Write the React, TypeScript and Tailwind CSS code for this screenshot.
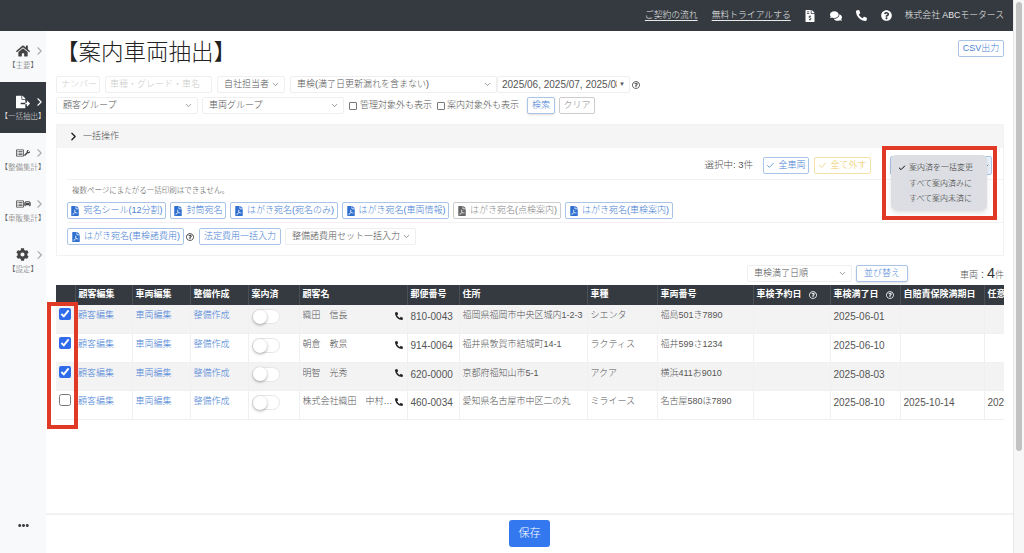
import { ChevronDown, ChevronRight, Check } from 'lucide-react'
import {
  FaCar,
  FaCog,
  FaComments,
  FaEllipsisH,
  FaFileExport,
  FaFileInvoiceDollar,
  FaFilePdf,
  FaHome,
  FaPhone,
  FaQuestionCircle,
  FaRegListAlt,
  FaRegQuestionCircle,
  FaWrench,
} from 'react-icons/fa'
import type { ReactNode } from 'react'

const COLS = [19, 57, 58, 58, 51, 108, 52, 128, 70, 96, 77, 70, 84, 80]

const ROWS = [
  { checked: true, name: '織田　信長', zip: '810-0043', addr: '福岡県福岡市中央区城内1-2-3', car: 'シエンタ', plate: '福島501き7890', exp: '2025-06-01', ins: '', any: '' },
  { checked: true, name: '朝倉　教景', zip: '914-0064', addr: '福井県敦賀市結城町14-1', car: 'ラクティス', plate: '福井599さ1234', exp: '2025-06-10', ins: '', any: '' },
  { checked: true, name: '明智　光秀', zip: '620-0000', addr: '京都府福知山市5-1', car: 'アクア', plate: '横浜411お9010', exp: '2025-08-03', ins: '', any: '' },
  { checked: false, name: '株式会社織田　中村信長', zip: '460-0034', addr: '愛知県名古屋市中区二の丸', car: 'ミライース', plate: '名古屋580ほ7890', exp: '2025-08-10', ins: '2025-10-14', any: '2025-11-20' },
]

function NavItem({ icon, label, active }: { icon: ReactNode; label: string; active?: boolean }) {
  return (
    <div className={`h-[51px] flex flex-col justify-center ${active ? 'bg-[#343a40] text-white' : 'text-[#444]'}`}>
      <div className="flex items-center h-[16px] pl-[16px] gap-[3px] mt-[1px]">
        <span className="w-[14px] flex justify-center">{icon}</span>
        <ChevronRight size={14} strokeWidth={2} className={active ? 'text-white' : 'text-[#aaa]'} />
      </div>
      <span className={`text-[7.5px] leading-[12px] text-center whitespace-nowrap mt-[1px] ${active ? 'text-[#ddd]' : 'text-[#666]'}`}>{label}</span>
    </div>
  )
}

function Select({ label, className }: { label: string; className: string }) {
  return (
    <div className={`h-[17px] flex items-center justify-between pl-[6px] pr-[4px] bg-white border border-[#efefef] rounded-[2px] text-[9px] text-[#555] whitespace-nowrap ${className}`}>
      <span>{label}</span>
      <ChevronDown size={9} className="text-[#777] shrink-0" />
    </div>
  )
}

function Btn({ children, className, gray }: { children: ReactNode; className: string; gray?: boolean }) {
  return (
    <div className={`h-[17px] flex items-center justify-center gap-[3px] bg-white border rounded-[2px] text-[9px] whitespace-nowrap ${gray ? 'border-[#ccc] text-[#888]' : 'border-[#a9c4e6] text-[#4a7fd4]'} ${className}`}>
      {children}
    </div>
  )
}

function PdfBtn({ label, className, gray }: { label: string; className: string; gray?: boolean }) {
  return (
    <Btn className={className} gray={gray}>
      <FaFilePdf size={10} className={gray ? 'text-[#666]' : 'text-[#2f6fd0]'} />
      {label}
    </Btn>
  )
}

function Help({ className }: { className?: string }) {
  return <FaRegQuestionCircle size={8} className={className} />
}

function Th({ children }: { children?: ReactNode }) {
  return <th className="px-[3px] text-left font-bold border-r border-[#4a5056] whitespace-nowrap overflow-hidden">{children}</th>
}

function Td({ children, num }: { children?: ReactNode; num?: boolean }) {
  return <td className={`px-[3px] pt-[4px] align-top border-r border-[#f0f0f0] whitespace-nowrap overflow-hidden ${num ? 'text-[10px]' : ''}`}>{children}</td>
}

export default function App() {
  return (
    <div className="w-[1024px] h-[553px] flex overflow-hidden bg-white font-['Liberation_Sans','Noto_Sans_CJK_JP',sans-serif] font-light">
      <div className="flex-1 flex flex-col min-w-0">
        <header className="h-[31px] bg-[#343a40] flex items-center justify-end gap-[11px] pr-[9px] text-[8.8px] text-[#e8e8e8]">
          <span className="underline underline-offset-2">ご契約の流れ</span>
          <span className="underline underline-offset-2 ml-[3px]">無料トライアルする</span>
          <FaFileInvoiceDollar size={12} className="text-white ml-[2px]" />
          <FaComments size={12} className="text-white ml-[3px]" />
          <FaPhone size={11} className="text-white ml-[3px] scale-x-[-1]" />
          <FaQuestionCircle size={11} className="text-white ml-[3px]" />
          <span className="ml-[2px]">株式会社 ABCモータース</span>
        </header>

        <div className="flex-1 flex min-h-0">
          <nav className="w-[46px] shrink-0 bg-[#f8f9fa] flex flex-col">
            <NavItem icon={<FaHome size={14} />} label="【主要】" />
            <NavItem active icon={<FaFileExport size={14} />} label="【一括抽出】" />
            <NavItem icon={<span className="flex items-center"><FaRegListAlt size={8} /><FaWrench size={6} /></span>} label="【整備集計】" />
            <NavItem icon={<span className="flex items-center"><FaRegListAlt size={8} /><FaCar size={7} /></span>} label="【車販集計】" />
            <NavItem icon={<FaCog size={13} />} label="【設定】" />
            <div className="mt-auto h-[40px] flex items-start justify-center pt-[7px] text-[#444]">
              <FaEllipsisH size={11} />
            </div>
          </nav>

          <main className="flex-1 flex flex-col min-w-0">
            <div className="flex-1 pl-[10px] pr-[9px] min-h-0">
              <div className="h-[45px] flex justify-between items-start">
                <h1 className="text-[22.5px] leading-[44px] text-[#222] font-light">【案内車両抽出】</h1>
                <Btn className="w-[46px] mt-[9px]">CSV出力</Btn>
              </div>

              <div className="flex items-center gap-[5px] h-[17px]">
                <div className="w-[44px] h-[17px] flex items-center px-[4px] border border-[#efefef] rounded-[2px] text-[9px] text-[#ccc] whitespace-nowrap">ナンバー</div>
                <div className="w-[107px] h-[17px] flex items-center px-[4px] border border-[#efefef] rounded-[2px] text-[9px] text-[#ccc] whitespace-nowrap">車種・グレード・車名</div>
                <Select label="自社担当者" className="w-[68px]" />
                <Select label="車検(満了日更新漏れを含まない)" className="w-[207px]" />
                <div className="-ml-[5px] w-[133px] h-[17px] flex items-center justify-between pl-[4px] pr-[4px] border border-[#efefef] rounded-[2px] text-[10px] text-[#555] whitespace-nowrap">
                  <span className="w-[115px] overflow-hidden">2025/06, 2025/07, 2025/08</span>
                  <span className="text-[6px]">▼</span>
                </div>
                <Help className="text-[#444] -ml-[3px]" />
              </div>

              <div className="flex items-center mt-[4px] h-[17px] text-[9px] text-[#555]">
                <Select label="顧客グループ" className="w-[142px]" />
                <Select label="車両グループ" className="w-[142px] ml-[4px]" />
                <span className="w-[8px] h-[8px] border border-[#777] rounded-[1px] ml-[5px]" />
                <span className="ml-[3px] whitespace-nowrap">管理対象外も表示</span>
                <span className="w-[8px] h-[8px] border border-[#777] rounded-[1px] ml-[5px]" />
                <span className="ml-[2px] whitespace-nowrap">案内対象外も表示</span>
                <Btn className="w-[28px] ml-[8px] shadow-sm">検索</Btn>
                <Btn gray className="w-[36px] ml-[4px]">クリア</Btn>
              </div>

              <section className="relative mt-[10px] h-[132px] border border-[#f2f2f2]">
                <div className="h-[23px] bg-[#f5f5f5] flex items-center pl-[10px] text-[9px] text-[#555]">
                  <ChevronRight size={13} strokeWidth={2.5} className="text-[#222]" />
                  <span className="ml-[3px]">一括操作</span>
                </div>
                <div className="ml-[10px]">
                  <div className="h-[32px] pt-[4px] flex items-center justify-end border-b border-[#f2f2f2] pr-[11px] text-[9px] text-[#555]">
                    <span className="text-[9.5px] mr-[10px]">選択中: 3件</span>
                    <Btn className="w-[46px]"><Check size={9} />全車両</Btn>
                    <Btn className="w-[57px] ml-[5px] !border-[#f3e2a8] !text-[#eccb68]"><Check size={9} />全て外す</Btn>
                    <Btn className="w-[102px] ml-[19px] !h-[19px] !bg-[#e8f0fb] !justify-end pr-[1px]">
                      <ChevronDown size={8} className="text-[#555]" />
                    </Btn>
                  </div>
                  <div className="h-[43px] border-b border-[#f2f2f2]">
                    <p className="pl-[5px] pt-[6px] text-[7.5px] leading-[10px] text-[#555]">複数ページにまたがる一括印刷はできません。</p>
                    <div className="flex gap-[4px] mt-[6px]">
                      <PdfBtn label="宛名シール(12分割)" className="w-[99px]" />
                      <PdfBtn label="封筒宛名" className="w-[56px]" />
                      <PdfBtn label="はがき宛名(宛名のみ)" className="w-[108px]" />
                      <PdfBtn label="はがき宛名(車両情報)" className="w-[107px]" />
                      <PdfBtn gray label="はがき宛名(点検案内)" className="w-[108px]" />
                      <PdfBtn label="はがき宛名(車検案内)" className="w-[108px]" />
                    </div>
                  </div>
                  <div className="flex items-center mt-[5px]">
                    <PdfBtn label="はがき宛名(車検諸費用)" className="w-[117px]" />
                    <Help className="text-[#333] ml-[2px]" />
                    <Btn className="w-[82px] ml-[5px]">法定費用一括入力</Btn>
                    <Select label="整備諸費用セット一括入力" className="w-[131px] ml-[4px]" />
                  </div>
                </div>

                <div className="absolute left-[834px] top-[30px] w-[96px] h-[55px] bg-[#dcdee3] rounded-[5px] shadow-md text-[8px] leading-[15.5px] text-[#333] pt-[5px] whitespace-nowrap">
                  <div className="flex items-center pl-[7px]"><Check size={8} strokeWidth={3} className="text-black mr-[3px]" />案内済を一括変更</div>
                  <div className="pl-[18px]">すべて案内済みに</div>
                  <div className="pl-[18px]">すべて案内未済に</div>
                </div>
                <div className="absolute left-[825px] top-[21px] w-[115px] h-[74px] border-[4px] border-[#e03a26]" />
              </section>

              <div className="mt-[9px] h-[17px] flex items-center justify-end text-[9px] text-[#555]">
                <Select label="車検満了日順" className="w-[105px]" />
                <Btn className="w-[52px] ml-[4px] shadow-sm">並び替え</Btn>
                <span className="ml-[44px] w-[52px] text-right whitespace-nowrap pt-[1px]">
                  車両：<span className="text-[14.5px] text-[#333]">4</span>件
                </span>
              </div>

              <div className="relative mt-[3px]">
                <div className="overflow-hidden">
                  <table className="table-fixed border-collapse text-[9px] text-[#555] w-[1008px]">
                    <colgroup>
                      {COLS.map((w, i) => (
                        <col key={i} style={{ width: w }} />
                      ))}
                    </colgroup>
                    <thead>
                      <tr className="h-[20px] bg-[#343a40] text-white">
                        <Th />
                        <Th>顧客編集</Th>
                        <Th>車両編集</Th>
                        <Th>整備作成</Th>
                        <Th>案内済</Th>
                        <Th>顧客名</Th>
                        <Th>郵便番号</Th>
                        <Th>住所</Th>
                        <Th>車種</Th>
                        <Th>車両番号</Th>
                        <Th><span className="inline-flex items-center gap-[7px]">車検予約日<Help /></span></Th>
                        <Th><span className="inline-flex items-center gap-[7px]">車検満了日<Help /></span></Th>
                        <Th>自賠責保険満期日</Th>
                        <Th>任意保険満期日</Th>
                      </tr>
                    </thead>
                    <tbody>
                      {ROWS.map((r, i) => (
                        <tr key={i} className={`h-[28.5px] border-b border-[#f0f0f0] ${i % 2 === 0 ? 'bg-[#f3f3f4]' : 'bg-white'}`}>
                          <td className="align-top pt-[3px] pl-[3px]">
                            <input type="checkbox" checked={r.checked} readOnly className="block w-[12px] h-[12px] m-0 accent-[#2f6bea]" />
                          </td>
                          <Td><span className="text-[#4a7fd4]">顧客編集</span></Td>
                          <Td><span className="text-[#4a7fd4]">車両編集</span></Td>
                          <Td><span className="text-[#4a7fd4]">整備作成</span></Td>
                          <Td>
                            <div className="w-[28px] h-[15px] rounded-full bg-white border border-[#e6e6e6] flex items-center">
                              <span className="w-[14px] h-[14px] rounded-full bg-white shadow-[0_1px_3px_rgba(0,0,0,0.35)]" />
                            </div>
                          </Td>
                          <Td>
                            <div className="flex items-center justify-between">
                              <span className="truncate w-[92px]">{r.name}</span>
                              <FaPhone size={8} className="text-[#222] scale-x-[-1] shrink-0 mr-[1px]" />
                            </div>
                          </Td>
                          <Td num>{r.zip}</Td>
                          <Td>{r.addr}</Td>
                          <Td>{r.car}</Td>
                          <Td>{r.plate}</Td>
                          <Td />
                          <Td num>{r.exp}</Td>
                          <Td num>{r.ins}</Td>
                          <Td num>{r.any}</Td>
                        </tr>
                      ))}
                    </tbody>
                  </table>
                </div>
                <div className="absolute -left-[9px] top-[17px] w-[31px] h-[127px] border-[4px] border-[#e03a26]" />
              </div>
            </div>

            <footer className="h-[40px] shrink-0 border-t-2 border-[#f0f2f4] flex justify-center pt-[5px]">
              <div className="w-[41px] h-[27px] rounded-[3px] bg-[#3478f0] text-white text-[11px] flex items-center justify-center">保存</div>
            </footer>
          </main>
        </div>
      </div>

      <div className="w-[11px] shrink-0 bg-[#f7f7f7] border-l border-[#e8e8e8] px-[2px] pt-[2px]">
        <div className="h-[449px] rounded-full bg-[#c2c2c2]" />
      </div>
    </div>
  )
}
